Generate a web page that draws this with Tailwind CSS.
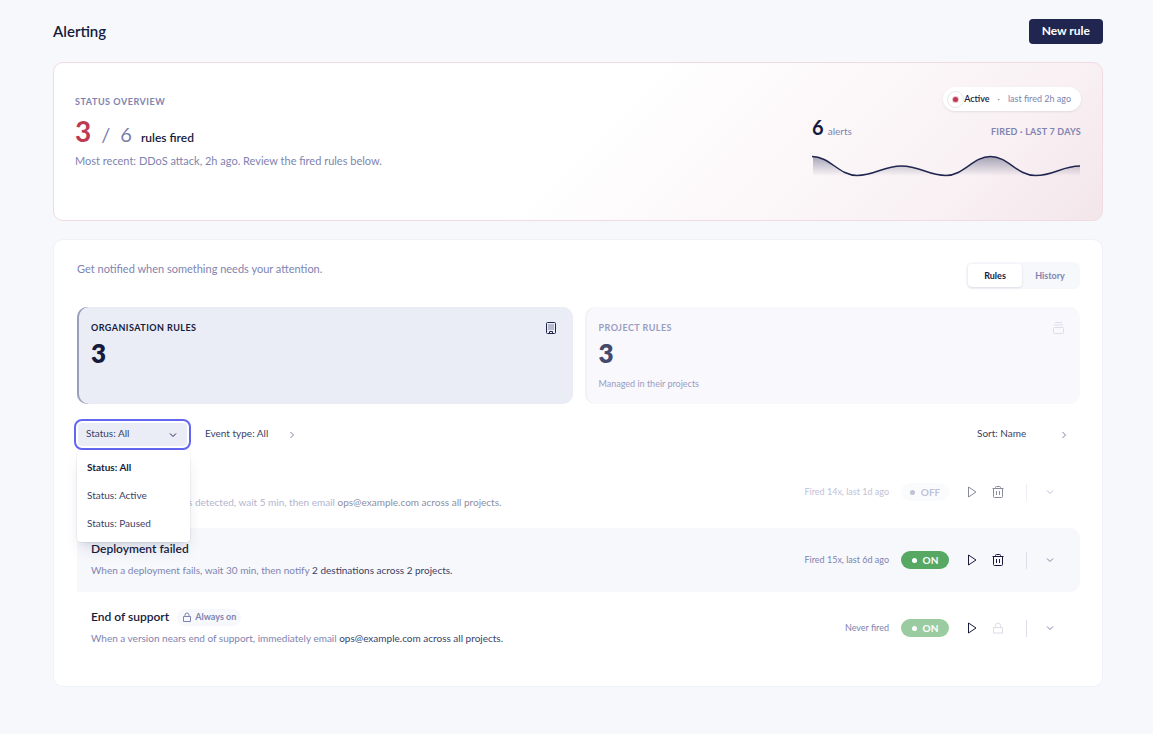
<!DOCTYPE html>
<html lang="en">
<head>
    <meta charset="utf-8" />
    <meta name="viewport" content="width=device-width, initial-scale=1" />
    <title>Alerting</title>
    <script src="https://cdn.jsdelivr.net/npm/@tailwindcss/browser@4"></script>
</head>
<body class="min-h-screen bg-[#f6f8fc] text-[#161b3d] font-['Lato',sans-serif]">
    <div class="pl-[53px] pr-[50px] pt-[19px] pb-12">
        <header class="flex items-center justify-between">
            <h1 class="pb-0.5 text-[15px] leading-5 font-semibold">Alerting</h1>
            <button type="button" class="rounded bg-[#20264f] px-[13px] pt-[3px] pb-[5px] text-xs leading-[17px] font-bold text-white">New rule</button>
        </header>

        <!-- Status overview -->
        <section class="mt-[18px] flex min-h-[159px] items-start justify-between rounded-[10px] border border-[#f0dbe3] bg-linear-135 from-white from-50% via-[#f9f1f4] via-85% to-[#f3e6ea] px-[21px] pb-6">
            <div class="pt-[31px]">
                <h2 class="text-[9px] leading-4 font-bold tracking-[0.06em] text-[#8084b0]">STATUS OVERVIEW</h2>
                <p class="mt-[3px] flex items-baseline leading-9">
                    <span class="text-[28px] font-bold text-[#bd3a52]">3</span>
                    <span class="ml-2.5 text-xl text-[#7a7fac]">/</span>
                    <span class="ml-2.5 text-xl text-[#7a7fac]">6</span>
                    <span class="ml-[9px] text-xs font-semibold">rules fired</span>
                </p>
                <p class="mt-1 text-[11px] leading-4 text-[#8084b0]">Most recent: DDoS attack, 2h ago. Review the fired rules below.</p>
            </div>
            <div class="flex w-[269px] flex-col pt-6">
                <div class="flex h-6 items-center self-end rounded-full bg-white pr-2.5 pl-1 text-[9px] leading-4 shadow-sm shadow-[#20264f]/8">
                    <span class="flex size-[17px] items-center justify-center rounded-full border border-[#dfece2]">
                        <span class="size-[5px] rounded-full bg-[#bd3a52] ring-1 ring-[#bd3a52]/30"></span>
                    </span>
                    <span class="font-semibold">Active</span>
                    <span class="mx-2 text-[#8084b0]">·</span>
                    <span class="text-[#8084b0]">last fired 2h ago</span>
                </div>
                <div class="mt-0.5 flex items-baseline justify-between leading-7">
                    <p><span class="text-xl font-bold">6</span> <span class="text-[10px] text-[#8084b0]">alerts</span></p>
                    <p class="text-[9px] font-bold tracking-wide text-[#8084b0]">FIRED · LAST 7 DAYS</p>
                </div>
                <svg viewBox="0 0 269 24" class="mt-[9px] h-6 w-full" fill="none" role="img" aria-label="Alerts fired in the last 7 days">
                    <defs>
                        <linearGradient id="area" x1="0" y1="1" x2="0" y2="21" gradientUnits="userSpaceOnUse">
                            <stop offset="0" stop-color="#20264f" stop-opacity=".4" />
                            <stop offset="1" stop-color="#20264f" stop-opacity="0" />
                        </linearGradient>
                    </defs>
                    <path fill="url(#area)" d="M1 1.500C18 1.500 27 20.500 45 20.500S71 11 89.500 11S116 20.500 134 20.500S161 1.500 178.500 1.500S205 20.500 223.500 20.500S250 11 268 11V21H1Z" />
                    <path stroke="#20264f" stroke-width="1.500" d="M0 1.500C18 1.500 27 20.500 45 20.500S71 11 89.500 11S116 20.500 134 20.500S161 1.500 178.500 1.500S205 20.500 223.500 20.500S250 11 268 11" />
                </svg>
            </div>
        </section>

        <main class="mt-[18px] rounded-[10px] border border-[#f0f2f9] bg-white pt-[22px] pr-[22px] pb-[26px] pl-[23px]">
            <div class="flex items-start justify-between">
                <p class="text-[11px] leading-[14px] text-[#8084b0]">Get notified when something needs your attention.</p>
                <div class="flex rounded-md bg-[#f6f8fc] p-0.5 text-[9px] leading-[23px] font-bold" role="tablist">
                    <button type="button" role="tab" aria-selected="true" class="w-[54px] rounded bg-white shadow-sm shadow-[#20264f]/10">Rules</button>
                    <button type="button" role="tab" aria-selected="false" class="w-14 text-[#8084b0]">History</button>
                </div>
            </div>

            <div class="mt-[18px] grid grid-cols-2 gap-3">
                <article class="flex h-[97px] justify-between rounded-[10px] bg-[#eaedf6] py-[13px] pr-[14px] pl-[14px] shadow-[inset_2px_0_0_#9a9eba]">
                    <div>
                        <h3 class="text-[9px] leading-4 font-bold tracking-wider">ORGANISATION RULES</h3>
                        <p class="mt-[3px] text-[26px] leading-7 font-extrabold">3</p>
                    </div>
                    <svg viewBox="0 0 14 14" class="mt-px mr-px size-3.5" fill="none" stroke="#20264f" aria-hidden="true">
                        <rect x="2.500" y="1.500" width="9" height="11" rx="1" />
                        <path stroke-dasharray="1 1" d="M4.500 4h5M4.500 6h5M4.500 8h5" />
                        <path d="M5.500 12.500v-2h3v2" />
                    </svg>
                </article>
                <article class="flex h-[97px] justify-between rounded-[10px] bg-[#f8f8fd] py-[13px] pr-[14px] pl-[14px] shadow-[inset_2px_0_0_#f0f2f9]">
                    <div>
                        <h3 class="text-[9px] leading-4 font-bold tracking-wider text-[#9a9dc1]">PROJECT RULES</h3>
                        <p class="mt-[3px] text-[26px] leading-7 font-extrabold text-[#454a6d]">3</p>
                        <p class="mt-[9px] text-[9px] leading-4 text-[#9a9dc1]">Managed in their projects</p>
                    </div>
                    <svg viewBox="0 0 14 14" class="mt-px mr-px size-3.5" fill="none" stroke="#dddee9" aria-hidden="true">
                        <path d="M4 1.500h7M3 4h9" />
                        <rect x="2.500" y="6.500" width="10" height="6" rx="1" />
                    </svg>
                </article>
            </div>

            <div class="mt-[19px] flex items-center justify-between text-[10px] text-[#3a3f66]">
                <div class="flex items-center">
                    <div class="relative ml-px">
                        <select aria-label="Status" class="block h-[23px] w-[109px] appearance-none rounded bg-[#eaedf6] pb-0.5 pl-2 outline-2 outline-offset-2 outline-[#6366f1]">
                            <option>Status: All</option>
                            <option>Status: Active</option>
                            <option>Status: Paused</option>
                        </select>
                        <svg viewBox="0 0 8 8" class="pointer-events-none absolute top-2 right-2.5 size-2" fill="none" stroke="#20264f" aria-hidden="true"><path d="M1 2.500L4 5.500L7 2.500" /></svg>
                        <ul class="absolute top-[27px] -left-px z-10 w-[113px] rounded bg-white pt-[3px] pb-[5px] shadow-lg ring-1 shadow-[#20264f]/12 ring-[#20264f]/4" role="listbox">
                            <li role="option" aria-selected="true" class="px-2.5 leading-7 font-bold text-[#161b3d]">Status: All</li>
                            <li role="option" aria-selected="false" class="px-2.5 leading-7">Status: Active</li>
                            <li role="option" aria-selected="false" class="px-2.5 leading-7">Status: Paused</li>
                        </ul>
                    </div>
                    <div class="relative ml-2">
                        <select aria-label="Event type" class="block h-[23px] w-[111px] appearance-none pb-0.5 pl-2.5">
                            <option>Event type: All</option>
                        </select>
                        <svg viewBox="0 0 8 8" class="pointer-events-none absolute top-2 right-2.5 size-2" fill="none" stroke="#8084b0" aria-hidden="true"><path d="M2.500 1L5.500 4L2.500 7" /></svg>
                    </div>
                </div>
                <div class="relative">
                    <select aria-label="Sort" class="block h-[23px] w-[113px] appearance-none pb-0.5 pl-2.5">
                        <option>Sort: Name</option>
                    </select>
                    <svg viewBox="0 0 8 8" class="pointer-events-none absolute top-2 right-3 size-2" fill="none" stroke="#8084b0" aria-hidden="true"><path d="M2.500 1L5.500 4L2.500 7" /></svg>
                </div>
            </div>

            <ul class="mt-[14px] flex flex-col gap-1">
                <li class="flex h-16 items-center justify-between rounded-[10px] pr-[26px] pl-[14px]">
                    <div class="pb-[3px] opacity-60">
                        <h3 class="text-xs leading-5 font-semibold">DDoS attack</h3>
                        <p class="mt-[3px] text-[10px] leading-4 text-[#8084b0]">When a DDoS attack is detected, wait 5 min, then email <span class="text-[#3a3f66]">ops@example.com across all projects.</span></p>
                    </div>
                    <div class="flex items-center opacity-50">
                        <span class="text-[9px] leading-4 text-[#8084b0]">Fired 14x, last 1d ago</span>
                        <button type="button" role="switch" aria-checked="false" class="ml-3 flex h-[18px] w-12 items-center justify-center gap-1.5 rounded-full bg-[#f6f8fc] text-[10px] font-bold text-[#8084b0]"><span class="size-[5px] rounded-full bg-current"></span>OFF</button>
                        <button type="button" aria-label="Run rule" class="ml-4"><svg viewBox="0 0 14 14" class="size-3.5" fill="none" stroke="#161b3d" stroke-linejoin="round"><path d="M3.500 2L11 7L3.500 12z" /></svg></button>
                        <button type="button" aria-label="Delete rule" class="ml-3"><svg viewBox="0 0 14 14" class="size-3.5" fill="none" stroke="#161b3d"><path d="M1.500 3.500h11M4.500 3.500v-1a1 1 0 0 1 1-1h3a1 1 0 0 1 1 1v1M2.500 3.500v8a1 1 0 0 0 1 1h7a1 1 0 0 0 1-1v-8M5.500 6v4M8.500 6v4" /></svg></button>
                        <span class="ml-[21px] h-[17px] border-l border-[#dcdee9]"></span>
                        <button type="button" aria-label="Expand rule" class="ml-[19px]"><svg viewBox="0 0 8 8" class="size-2" fill="none" stroke="#8084b0"><path d="M1 2.500L4 5.500L7 2.500" /></svg></button>
                    </div>
                </li>
                <li class="flex h-16 items-center justify-between rounded-r-[10px] bg-[#f6f8fc] pr-[26px] pl-[14px]">
                    <div class="pb-[3px]">
                        <h3 class="text-xs leading-5 font-semibold">Deployment failed</h3>
                        <p class="mt-[3px] text-[10px] leading-4 text-[#8084b0]">When a deployment fails, wait 30 min, then notify <span class="text-[#3a3f66]">2 destinations across 2 projects.</span></p>
                    </div>
                    <div class="flex items-center">
                        <span class="text-[9px] leading-4 text-[#8084b0]">Fired 15x, last 6d ago</span>
                        <button type="button" role="switch" aria-checked="true" class="ml-3 flex h-[18px] w-12 items-center justify-center gap-1.5 rounded-full bg-[#56a862] text-[10px] font-bold text-white"><span class="size-[5px] rounded-full bg-current"></span>ON</button>
                        <button type="button" aria-label="Run rule" class="ml-4"><svg viewBox="0 0 14 14" class="size-3.5" fill="none" stroke="#161b3d" stroke-linejoin="round"><path d="M3.500 2L11 7L3.500 12z" /></svg></button>
                        <button type="button" aria-label="Delete rule" class="ml-3"><svg viewBox="0 0 14 14" class="size-3.5" fill="none" stroke="#161b3d"><path d="M1.500 3.500h11M4.500 3.500v-1a1 1 0 0 1 1-1h3a1 1 0 0 1 1 1v1M2.500 3.500v8a1 1 0 0 0 1 1h7a1 1 0 0 0 1-1v-8M5.500 6v4M8.500 6v4" /></svg></button>
                        <span class="ml-[21px] h-[17px] border-l border-[#dcdee9]"></span>
                        <button type="button" aria-label="Expand rule" class="ml-[19px]"><svg viewBox="0 0 8 8" class="size-2" fill="none" stroke="#8084b0"><path d="M1 2.500L4 5.500L7 2.500" /></svg></button>
                    </div>
                </li>
                <li class="flex h-16 items-center justify-between rounded-[10px] pr-[26px] pl-[14px]">
                    <div class="pb-[3px]">
                        <div class="flex items-center gap-2">
                            <h3 class="text-xs leading-5 font-semibold">End of support</h3>
                            <span class="flex h-[17px] items-center gap-[3px] rounded-full bg-[#f6f8fc] px-[5px] text-[9px] font-bold text-[#8084b0]">
                                <svg viewBox="0 0 10 10" class="size-2.5" fill="none" stroke="currentColor" aria-hidden="true"><path d="M1.500 4.500h7v5h-7zM3 4.500V3a2 2 0 0 1 4 0v1.500" /></svg>
                                Always on
                            </span>
                        </div>
                        <p class="mt-[3px] text-[10px] leading-4 text-[#8084b0]">When a version nears end of support, immediately email <span class="text-[#3a3f66]">ops@example.com across all projects.</span></p>
                    </div>
                    <div class="flex items-center">
                        <span class="text-[9px] leading-4 text-[#8084b0]">Never fired</span>
                        <button type="button" role="switch" aria-checked="true" disabled class="ml-3 flex h-[18px] w-12 items-center justify-center gap-1.5 rounded-full bg-[#9acba1] text-[10px] font-bold text-white"><span class="size-[5px] rounded-full bg-current"></span>ON</button>
                        <button type="button" aria-label="Run rule" class="ml-4"><svg viewBox="0 0 14 14" class="size-3.5" fill="none" stroke="#161b3d" stroke-linejoin="round"><path d="M3.500 2L11 7L3.500 12z" /></svg></button>
                        <button type="button" aria-label="Locked rule" disabled class="ml-3"><svg viewBox="0 0 14 14" class="size-3.5" fill="none" stroke="#dcdde8"><path d="M2.500 6.500h9v5.500h-9zM4.500 6.500V4.500a2.500 2.500 0 0 1 5 0v2" /></svg></button>
                        <span class="ml-[21px] h-[17px] border-l border-[#dcdee9]"></span>
                        <button type="button" aria-label="Expand rule" class="ml-[19px]"><svg viewBox="0 0 8 8" class="size-2" fill="none" stroke="#8084b0"><path d="M1 2.500L4 5.500L7 2.500" /></svg></button>
                    </div>
                </li>
            </ul>
        </main>
    </div>
</body>
</html>
